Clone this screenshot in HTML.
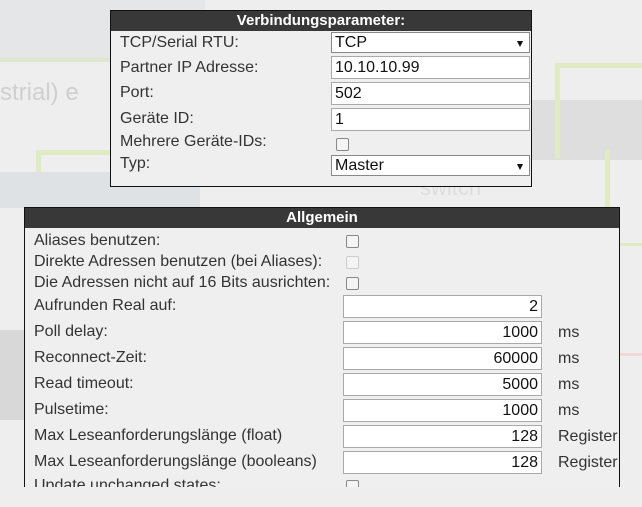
<!DOCTYPE html>
<html><head><style>
body{margin:0;width:642px;height:507px;overflow:hidden;background:#eeeeee;position:relative;font-family:"Liberation Sans",Arial,sans-serif;font-size:16px;color:#333;}
.a{position:absolute}
.panel{position:absolute;background:#efefef;border:1px solid #111;box-sizing:border-box}
.hd{position:absolute;left:0;right:0;top:0;height:20px;background:#383838;color:#fff;font-weight:bold;text-align:center;line-height:20px;font-size:15px}
.lbl{position:absolute;white-space:nowrap;line-height:18px}
.inp{position:absolute;background:#fff;border:1px solid #a9a9a9;box-sizing:border-box;height:23px;line-height:21px;padding:0 3px;color:#111}
.r{text-align:right}
.sel{border-color:#888}
.sel:after{content:"";position:absolute;right:6px;top:8px;border-left:3px solid transparent;border-right:3px solid transparent;border-top:6px solid #111}
.cb{position:absolute;width:11px;height:11px;border:1px solid #888;border-radius:2px;background:#f4f4f4}
</style></head><body>
<div class="a" style="left:0;top:0;width:205px;height:58px;background:#e4e6e8"></div>
<div class="a" style="left:0;top:58px;width:170px;height:4px;background:#dfe6cf"></div>
<div class="a" style="left:0;top:78px;width:110px;height:30px;color:#cfcfcf;font-size:24px;line-height:30px">strial) e</div>
<div class="a" style="left:36px;top:150px;width:5px;height:60px;background:#e0ebc4"></div>
<div class="a" style="left:36px;top:150px;width:80px;height:5px;background:#e0ebc4"></div>
<div class="a" style="left:0;top:172px;width:200px;height:36px;background:#dfe2e4"></div>
<div class="a" style="left:532px;top:100px;width:110px;height:60px;background:#dedede"></div>
<div class="a" style="left:555px;top:63px;width:5px;height:95px;background:#e0ebc4"></div>
<div class="a" style="left:555px;top:63px;width:87px;height:5px;background:#e0ebc4"></div>
<div class="a" style="left:605px;top:150px;width:5px;height:58px;background:#e0ebc4"></div>
<div class="a" style="left:420px;top:175px;color:#dddddd;font-size:22px">switch</div>
<div class="a" style="left:0;top:330px;width:24px;height:90px;background:#d8d8d8"></div>
<div class="a" style="left:619px;top:243px;width:23px;height:3px;background:#e0ebc4"></div>
<div class="a" style="left:619px;top:353px;width:23px;height:3px;background:#f2d8d8"></div>

<div class="panel" style="left:110px;top:10px;width:422px;height:177px">
<div class="hd">Verbindungsparameter:</div>
<div class="lbl" style="left:9px;top:23px">TCP/Serial RTU:</div>
<div class="inp sel" style="left:220px;top:21px;width:199px;height:21px;line-height:19px">TCP</div>
<div class="lbl" style="left:9px;top:48px">Partner IP Adresse:</div>
<div class="inp" style="left:220px;top:45px;width:199px">10.10.10.99</div>
<div class="lbl" style="left:9px;top:73px">Port:</div>
<div class="inp" style="left:220px;top:71px;width:199px">502</div>
<div class="lbl" style="left:9px;top:99px">Geräte ID:</div>
<div class="inp" style="left:220px;top:97px;width:199px">1</div>
<div class="lbl" style="left:9px;top:122px">Mehrere Geräte-IDs:</div>
<div class="cb" style="left:225px;top:127px"></div>
<div class="lbl" style="left:9px;top:144px">Typ:</div>
<div class="inp sel" style="left:220px;top:144px;width:199px;height:21px;line-height:19px">Master</div>
</div>

<div class="panel" style="left:24px;top:207px;width:596px;height:300px;border-bottom:none">
<div class="hd">Allgemein</div>
<div class="lbl" style="left:9px;top:24px">Aliases benutzen:</div>
<div class="cb" style="left:321px;top:27px"></div>
<div class="lbl" style="left:9px;top:45px">Direkte Adressen benutzen (bei Aliases):</div>
<div class="cb" style="left:321px;top:48px;border-color:#ccc"></div>
<div class="lbl" style="left:9px;top:66px">Die Adressen nicht auf 16 Bits ausrichten:</div>
<div class="cb" style="left:321px;top:69px"></div>
<div class="lbl" style="left:9px;top:89px">Aufrunden Real auf:</div>
<div class="inp r" style="left:318px;top:87px;width:199px">2</div>
<div class="lbl" style="left:9px;top:115px">Poll delay:</div>
<div class="inp r" style="left:318px;top:113px;width:199px">1000</div>
<div class="lbl" style="left:533px;top:116px">ms</div>
<div class="lbl" style="left:9px;top:141px">Reconnect-Zeit:</div>
<div class="inp r" style="left:318px;top:139px;width:199px">60000</div>
<div class="lbl" style="left:533px;top:142px">ms</div>
<div class="lbl" style="left:9px;top:167px">Read timeout:</div>
<div class="inp r" style="left:318px;top:165px;width:199px">5000</div>
<div class="lbl" style="left:533px;top:168px">ms</div>
<div class="lbl" style="left:9px;top:193px">Pulsetime:</div>
<div class="inp r" style="left:318px;top:191px;width:199px">1000</div>
<div class="lbl" style="left:533px;top:194px">ms</div>
<div class="lbl" style="left:9px;top:219px">Max Leseanforderungslänge (float)</div>
<div class="inp r" style="left:318px;top:217px;width:199px">128</div>
<div class="lbl" style="left:533px;top:220px">Register</div>
<div class="lbl" style="left:9px;top:245px">Max Leseanforderungslänge (booleans)</div>
<div class="inp r" style="left:318px;top:243px;width:199px">128</div>
<div class="lbl" style="left:533px;top:246px">Register</div>
<div class="lbl" style="left:9px;top:269px">Update unchanged states:</div>
<div class="cb" style="left:321px;top:272px"></div>
</div>
<div class="a" style="left:0;top:487px;width:642px;height:20px;background:#eeeeee"></div>
</body></html>
